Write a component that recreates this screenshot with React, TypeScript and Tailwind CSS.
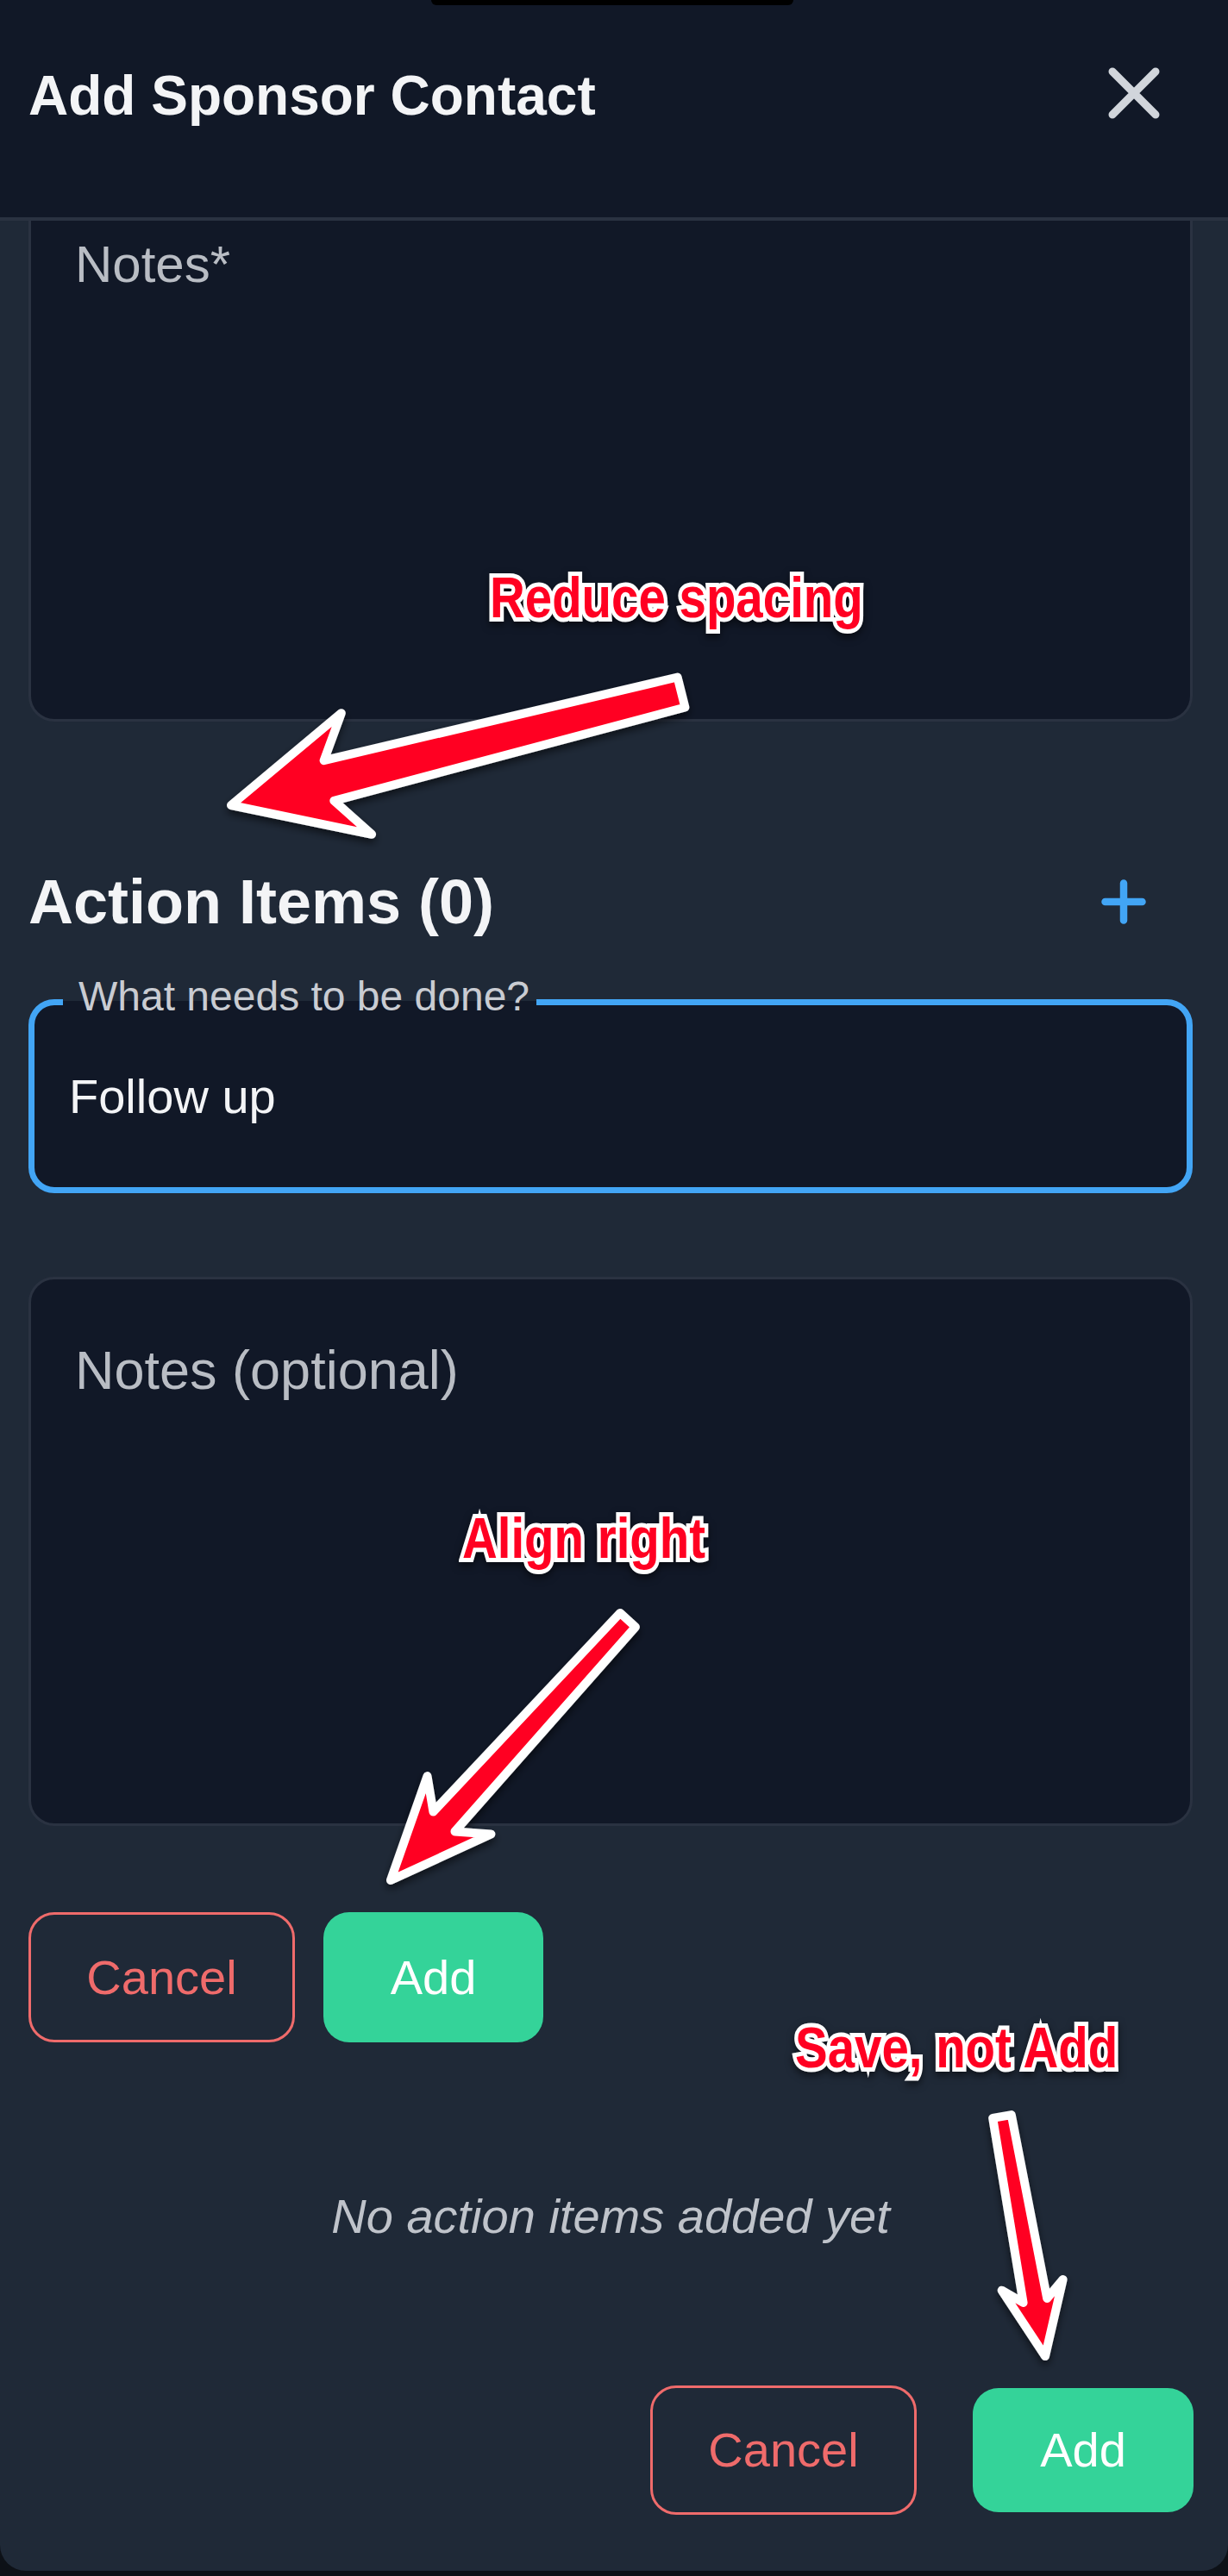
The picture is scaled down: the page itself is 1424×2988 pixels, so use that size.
import React from "react";

type Arrow = { t: [number, number]; p: [number, number]; wt: number; ws: number; wh: number; hl: number };

function arrowPoints(a: Arrow): string {
  const [tx, ty] = a.t;
  const [px, py] = a.p;
  const dx = px - tx;
  const dy = py - ty;
  const L = Math.hypot(dx, dy);
  const ux = dx / L;
  const uy = dy / L;
  const nx = -uy;
  const ny = ux;
  const jx = px - ux * a.hl * 0.78;
  const jy = py - uy * a.hl * 0.78;
  const bx = px - ux * a.hl;
  const by = py - uy * a.hl;
  const pts: [number, number][] = [
    [tx + (nx * a.wt) / 2, ty + (ny * a.wt) / 2],
    [jx + (nx * a.ws) / 2, jy + (ny * a.ws) / 2],
    [bx + (nx * a.wh) / 2, by + (ny * a.wh) / 2],
    [px, py],
    [bx - (nx * a.wh) / 2, by - (ny * a.wh) / 2],
    [jx - (nx * a.ws) / 2, jy - (ny * a.ws) / 2],
    [tx - (nx * a.wt) / 2, ty - (ny * a.wt) / 2],
  ];
  return pts.map(([x, y]) => `${x.toFixed(1)},${y.toFixed(1)}`).join(" ");
}

const arrows: Arrow[] = [
  { t: [790, 803], p: [268, 934], wt: 36, ws: 48, wh: 145, hl: 150 },
  { t: [728, 1879], p: [453, 2181], wt: 24, ws: 34, wh: 100, hl: 118 },
  { t: [1162, 2455], p: [1212, 2733], wt: 22, ws: 28, wh: 72, hl: 84 },
];

function NotesField({ label, className, size }: { label: string; className?: string; size: "a" | "b" }) {
  return (
    <div
      className={`h-[637px] shrink-0 rounded-[30px] border-[3px] border-[#2a3241] bg-[#111827] pl-[51px] pt-[74px] ${className ?? ""}`}
    >
      <span
        className={`block leading-none text-[#b9bdc4] ${size === "a" ? "text-[60px]" : "text-[63px]"}`}
      >
        {label}
      </span>
    </div>
  );
}

export default function App() {
  return (
    <div className="relative h-[2988px] w-[1424px] overflow-hidden bg-[#0d1117] font-['Liberation_Sans',Arial,sans-serif]">
      <div className="flex h-[2982px] w-full flex-col overflow-hidden rounded-b-[30px] bg-[#1f2937]">
        {/* Header */}
        <div className="relative z-10 flex h-[256px] shrink-0 items-start justify-between border-b-4 border-[#2a3241] bg-[#111827] pl-[33px] pr-[79px] pt-[79px]">
          <h2 className="text-[64px] font-bold leading-none text-[#f3f4f6]">Add Sponsor Contact</h2>
          <button className="-mt-[1px] flex h-[60px] w-[60px] items-center justify-center">
            <svg width="60" height="60" viewBox="0 0 60 60" fill="none">
              <path d="M5 5 L55 55 M55 5 L5 55" stroke="#d1d5db" strokeWidth="9" strokeLinecap="round" />
            </svg>
          </button>
        </div>

        {/* Body (scrolled) */}
        <div className="flex-1 overflow-hidden">
          <div className="-mt-[56px] flex flex-col pl-[33px] pr-[41px]">
            <NotesField label="Notes*" size="a" />

            <div className="mt-[169px] flex h-[80px] items-center justify-between">
              <h3 className="text-[72px] font-bold leading-none text-[#f3f4f6]">Action Items (0)</h3>
              <button className="mr-[54px] flex h-[52px] w-[52px] items-center justify-center">
                <svg width="52" height="52" viewBox="0 0 52 52" fill="none">
                  <path d="M26 4.5 V47.5 M4.5 26 H47.5" stroke="#42a5f5" strokeWidth="8.5" strokeLinecap="round" />
                </svg>
              </button>
            </div>

            <div className="relative mt-[73px] flex h-[225px] shrink-0 items-center rounded-[30px] border-[7px] border-[#42a5f5] bg-[#111827] pl-[40px]">
              <span className="absolute -top-[34px] left-[33px] bg-[linear-gradient(to_bottom,#1f2937_29px,#111827_29px)] pl-[18px] pr-[8px] text-[48px] leading-none text-[#c9ccd2]">
                What needs to be done?
              </span>
              <span className="text-[56px] leading-none text-[#f3f4f6]">Follow up</span>
            </div>

            <NotesField label="Notes (optional)" size="b" className="mt-[97px]" />

            <div className="mt-[100px] flex gap-[33px]">
              <button className="flex h-[151px] w-[309px] items-center justify-center rounded-[30px] border-[3px] border-[#ef6b6b] text-[56px] leading-none text-[#ef6b6b]">
                Cancel
              </button>
              <button className="flex h-[151px] w-[255px] items-center justify-center rounded-[30px] bg-[#34d399] text-[56px] leading-none text-white">
                Add
              </button>
            </div>

            <p className="mt-[174px] text-center text-[56px] italic leading-none text-[#bfc3ca]">No action items added yet</p>
          </div>
        </div>

        {/* Footer */}
        <div className="flex h-[240px] shrink-0 items-center justify-end gap-[65px] pb-[65px] pr-[40px] pt-[25px]">
          <button className="flex h-[150px] w-[309px] items-center justify-center rounded-[30px] border-[3px] border-[#ef6b6b] text-[56px] leading-none text-[#ef6b6b]">
            Cancel
          </button>
          <button className="flex h-[144px] w-[256px] items-center justify-center rounded-[30px] bg-[#34d399] text-[56px] leading-none text-white">
            Add
          </button>
        </div>
      </div>

      {/* top notch */}
      <div className="absolute left-[500px] top-0 z-20 h-[6px] w-[420px] rounded-b-[8px] bg-black" />

      {/* Annotation overlay */}
      <div className="pointer-events-none absolute inset-0 z-30">
        <svg className="absolute inset-0" width="1424" height="2988" viewBox="0 0 1424 2988">
          <defs>
            <filter id="ashadow" x="-30%" y="-30%" width="160%" height="160%">
              <feDropShadow dx="0" dy="5" stdDeviation="5" floodColor="#000000" floodOpacity="0.55" />
            </filter>
          </defs>
          {arrows.map((a, i) => (
            <polygon
              key={i}
              points={arrowPoints(a)}
              fill="#ff0022"
              stroke="#ffffff"
              strokeWidth="10"
              strokeLinejoin="round"
              filter="url(#ashadow)"
            />
          ))}
        </svg>
        <span className="absolute left-[568px] top-[660px] origin-left scale-x-[0.855] whitespace-nowrap text-[66px] font-bold leading-none text-[#ff0022] drop-shadow-[0_4px_5px_rgba(0,0,0,0.55)] [-webkit-text-stroke:10px_#ffffff] [paint-order:stroke_fill]">
          Reduce spacing
        </span>
        <span className="absolute left-[536px] top-[1751px] origin-left scale-x-[0.855] whitespace-nowrap text-[66px] font-bold leading-none text-[#ff0022] drop-shadow-[0_4px_5px_rgba(0,0,0,0.55)] [-webkit-text-stroke:10px_#ffffff] [paint-order:stroke_fill]">
          Align right
        </span>
        <span className="absolute left-[922px] top-[2342px] origin-left scale-x-[0.855] whitespace-nowrap text-[66px] font-bold leading-none text-[#ff0022] drop-shadow-[0_4px_5px_rgba(0,0,0,0.55)] [-webkit-text-stroke:10px_#ffffff] [paint-order:stroke_fill]">
          Save, not Add
        </span>
      </div>
    </div>
  );
}
